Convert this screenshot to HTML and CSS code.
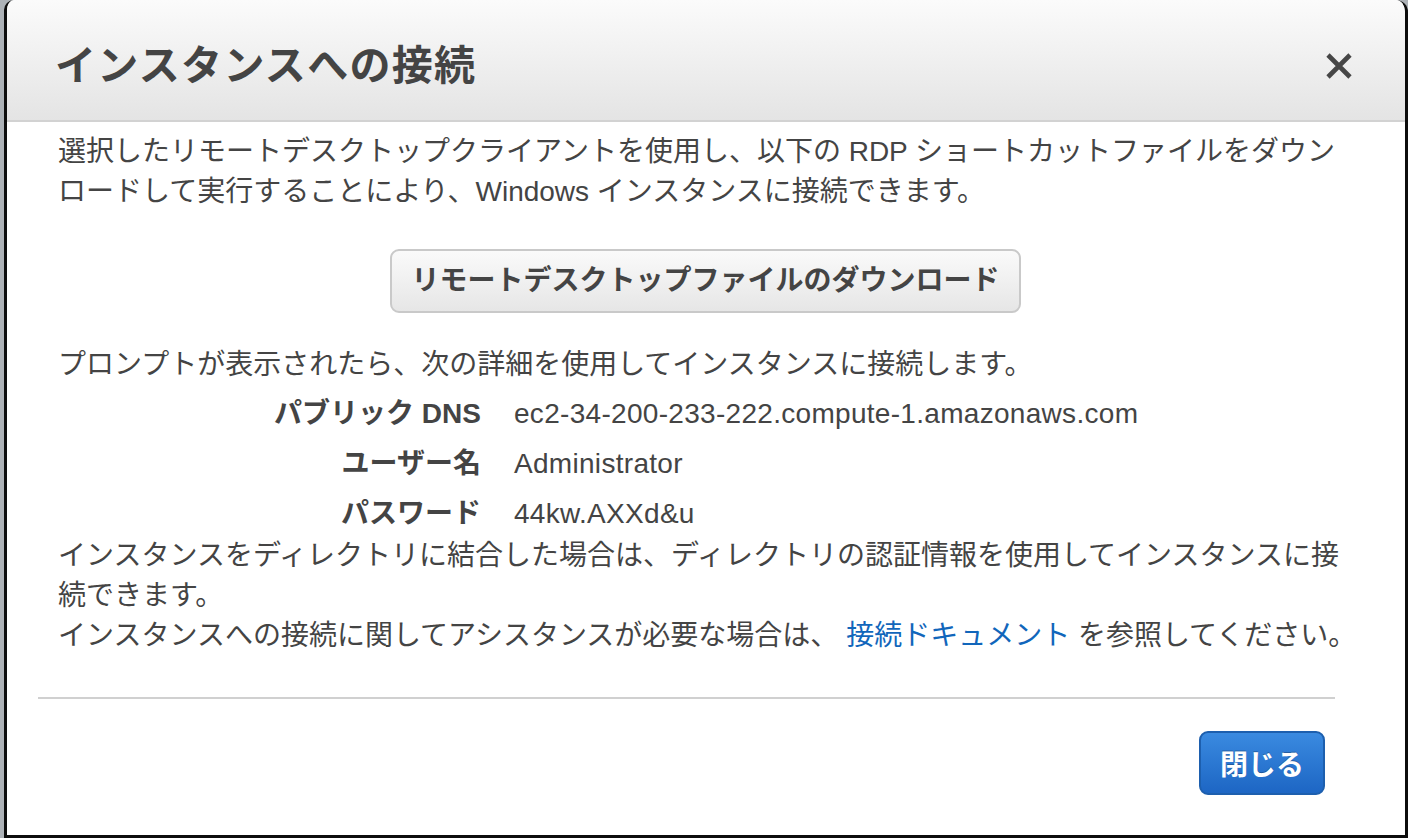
FILE: index.html
```html
<!DOCTYPE html>
<html lang="ja">
<head>
<meta charset="utf-8">
<title>インスタンスへの接続</title>
<link rel="stylesheet" href="styles.css">
</head>
<body>
<div class="backdrop">
  <div class="modal">
    <div class="modal-header">
      <h1 class="modal-title">インスタンスへの接続</h1>
      <button class="close-btn" aria-label="閉じる">
        <svg width="28" height="28" viewBox="0 0 28 28"><path d="M3 3 L25 25 M25 3 L3 25" stroke="#464646" stroke-width="4.6" fill="none"/></svg>
      </button>
    </div>
    <div class="modal-body">
      <p class="intro">選択したリモートデスクトップクライアントを使用し、以下の RDP ショートカットファイルをダウンロードして実行することにより、Windows インスタンスに接続できます。</p>
      <div class="download-row">
        <button class="btn-download">リモートデスクトップファイルのダウンロード</button>
      </div>
      <p class="prompt">プロンプトが表示されたら、次の詳細を使用してインスタンスに接続します。</p>
      <div class="details">
        <div class="label">パブリック DNS</div>
        <div class="value">ec2-34-200-233-222.compute-1.amazonaws.com</div>
        <div class="label">ユーザー名</div>
        <div class="value">Administrator</div>
        <div class="label">パスワード</div>
        <div class="value">44kw.AXXd&amp;u</div>
      </div>
      <p class="note">インスタンスをディレクトリに結合した場合は、ディレクトリの認証情報を使用してインスタンスに接続できます。<br>インスタンスへの接続に関してアシスタンスが必要な場合は、 <a href="#" class="doc-link">接続ドキュメント</a> を参照してください。</p>
    </div>
    <div class="modal-footer">
      <div class="rule"></div>
      <div class="footer-actions">
        <button class="btn-close">閉じる</button>
      </div>
    </div>
  </div>
</div>
</body>
</html>
```

FILE: styles.css
```css
* { box-sizing: border-box; }
html, body {
  margin: 0;
  padding: 0;
  width: 1408px;
  height: 838px;
  overflow: hidden;
}
body {
  background: #adb2b7;
  font-family: "Liberation Sans", "Noto Sans CJK JP", sans-serif;
  color: #444;
}
.backdrop {
  display: flex;
  height: 838px;
  padding-left: 4px;
}
.modal {
  width: 1404px;
  height: 838px;
  background: #fff;
  border: 3px solid #0d0d0d;
  border-top: 0;
  border-radius: 10px 12px 0 0;
  display: flex;
  flex-direction: column;
  overflow: hidden;
}
.modal-header {
  height: 122px;
  flex: none;
  background: linear-gradient(#fbfbfb, #e4e4e4);
  border-bottom: 2px solid #d2d2d2;
  display: flex;
  align-items: center;
  justify-content: space-between;
  padding: 12px 52px 0 48px;
}
.modal-title {
  margin: 0;
  font-size: 41px;
  font-weight: bold;
  color: #444;
  line-height: 50px;
  letter-spacing: 1.3px;
}
.close-btn {
  border: 0;
  background: none;
  padding: 0;
  width: 28px;
  height: 28px;
  display: flex;
  cursor: pointer;
}
.modal-body {
  padding: 10px 46px 0 51px;
  font-size: 28px;
  line-height: 40px;
}
.modal-body p { margin: 0; }
.download-row {
  display: flex;
  justify-content: center;
  margin-top: 37px;
}
.btn-download {
  font-family: inherit;
  font-size: 28px;
  font-weight: bold;
  color: #444;
  line-height: 40px;
  height: 64px;
  padding: 0 19px;
  border: 2px solid #c9c9c9;
  border-radius: 9px;
  background: linear-gradient(#fafafa, #e6e6e6);
  margin-right: 6px;
}
.prompt { margin-top: 32px !important; }
.details {
  display: grid;
  grid-template-columns: 423px auto;
  column-gap: 33px;
  row-gap: 10px;
  margin-top: 9px;
}
.label {
  text-align: right;
  font-weight: bold;
}
.value {
  color: #444;
  letter-spacing: 0.3px;
}
.note { margin-top: 2px !important; }
.doc-link {
  color: #1166bb;
  text-decoration: none;
}
.modal-footer {
  padding: 0 70px 0 31px;
  margin-top: 41px;
}
.rule {
  height: 2px;
  background: #d0d0d0;
}
.footer-actions {
  display: flex;
  justify-content: flex-end;
  padding-top: 32px;
  padding-right: 10px;
}
.btn-close {
  font-family: inherit;
  font-size: 28px;
  font-weight: bold;
  color: #fff;
  height: 64px;
  width: 126px;
  padding: 0;
  border: 2px solid #1d5fae;
  border-radius: 9px;
  background: linear-gradient(#3a8ae0, #1d66c4);
  text-shadow: 0 -1px 0 rgba(0,0,0,0.25);
}
```
